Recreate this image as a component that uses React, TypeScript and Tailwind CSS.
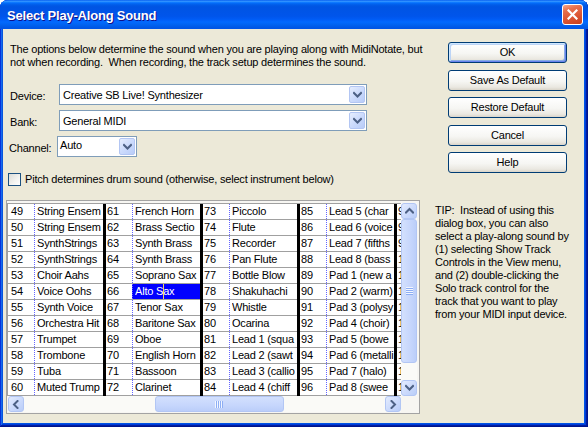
import React from "react";

const groups: { start: number; names: string[] }[] = [
  {
    start: 49,
    names: ["String Ensem", "String Ensem", "SynthStrings", "SynthStrings", "Choir Aahs", "Voice Oohs", "Synth Voice", "Orchestra Hit", "Trumpet", "Trombone", "Tuba", "Muted Trump"],
  },
  {
    start: 61,
    names: ["French Horn", "Brass Sectio", "Synth Brass", "Synth Brass", "Soprano Sax", "Alto Sax", "Tenor Sax", "Baritone Sax", "Oboe", "English Horn", "Bassoon", "Clarinet"],
  },
  {
    start: 73,
    names: ["Piccolo", "Flute", "Recorder", "Pan Flute", "Bottle Blow", "Shakuhachi", "Whistle", "Ocarina", "Lead 1 (squa", "Lead 2 (sawt", "Lead 3 (callio", "Lead 4 (chiff"],
  },
  {
    start: 85,
    names: ["Lead 5 (char", "Lead 6 (voice", "Lead 7 (fifths", "Lead 8 (bass", "Pad 1 (new a", "Pad 2 (warm)", "Pad 3 (polysy", "Pad 4 (choir)", "Pad 5 (bowe", "Pad 6 (metalli", "Pad 7 (halo)", "Pad 8 (swee"],
  },
  {
    start: 97,
    names: ["", "", "", "", "", "", "", "", "", "", "", ""],
  },
];

const groupWidths = ["w-[98px]", "w-[97px]", "w-[97px]", "w-[97px]", "w-[97px]"];

function Chevron({ dir }: { dir: "up" | "down" | "left" | "right" }) {
  const d =
    dir === "up"
      ? "M1 5.5 L4.5 2 L8 5.5"
      : dir === "down"
      ? "M1 2 L4.5 5.5 L8 2"
      : dir === "left"
      ? "M5.5 1 L2 4.5 L5.5 8"
      : "M2.5 1 L6 4.5 L2.5 8";
  const w = dir === "up" || dir === "down" ? 9 : 8;
  const h = dir === "up" || dir === "down" ? 8 : 9;
  return (
    <svg width={w} height={h} viewBox={`0 0 ${w} ${h}`}>
      <path d={d} fill="none" stroke="#4D6185" strokeWidth="2" strokeLinecap="square" />
    </svg>
  );
}

function Combo({ width, text, textClass }: { width: string; text: string; textClass: string }) {
  return (
    <div className={`flex h-[21px] border border-[#7F9DB9] bg-white ${width}`}>
      <div className={`flex-1 overflow-hidden whitespace-nowrap ${textClass}`}>{text}</div>
      <div className="m-[1px] flex w-[16px] items-center justify-center rounded-[2px] border border-[#B3C6F3] bg-[linear-gradient(135deg,#E6EEFE_0%,#CCDBFC_50%,#B8CCF8_100%)]">
        <Chevron dir="down" />
      </div>
    </div>
  );
}

function Button({ label, isDefault }: { label: string; isDefault?: boolean }) {
  return (
    <div
      className={`flex h-[21px] items-center justify-center rounded-[3px] border border-[#003C74] bg-[linear-gradient(180deg,#FFFFFF_0%,#F6F6F3_55%,#EAE8E1_85%,#D9D4C9_100%)] ${
        isDefault
          ? "shadow-[inset_1px_1px_#CEE7FF,inset_-1px_-1px_#6982EE,inset_2px_2px_#BCD4F6,inset_-2px_-2px_#89ADE4]"
          : ""
      }`}
    >
      {label}
    </div>
  );
}

const scrollBtn =
  "flex shrink-0 items-center justify-center rounded-[3px] border border-[#B2C6F4] bg-[linear-gradient(135deg,#E4ECFE_0%,#CBDAFC_55%,#B9CDF8_100%)]";

function VScroll() {
  return (
    <div className="flex h-[193px] w-[16px] flex-col bg-[#FAFAF7]">
      <div className={`${scrollBtn} h-[16px] w-[16px]`}>
        <Chevron dir="up" />
      </div>
      <div className="flex h-[144px] w-[16px] flex-col items-center justify-center gap-[1px] rounded-[3px] border border-[#B2C6F4] bg-[linear-gradient(90deg,#D3E0FD_0%,#C6D6FC_60%,#BBCEF9_100%)]">
        <div className="h-[1px] w-[7px] bg-[#8DAEF4] shadow-[0_-1px_#F2F6FF]" />
        <div className="h-[1px] w-[7px] bg-[#8DAEF4] shadow-[0_-1px_#F2F6FF]" />
        <div className="h-[1px] w-[7px] bg-[#8DAEF4] shadow-[0_-1px_#F2F6FF]" />
        <div className="h-[1px] w-[7px] bg-[#8DAEF4] shadow-[0_-1px_#F2F6FF]" />
      </div>
      <div className="h-[17px]" />
      <div className={`${scrollBtn} h-[16px] w-[16px]`}>
        <Chevron dir="down" />
      </div>
    </div>
  );
}

function HScroll() {
  return (
    <div className="ml-[1px] flex h-[16px] w-[393px] bg-[#FAFAF7]">
      <div className={`${scrollBtn} h-[16px] w-[16px]`}>
        <Chevron dir="left" />
      </div>
      <div className="w-[131px]" />
      <div className="flex h-[16px] w-[129px] items-center justify-center gap-[1px] rounded-[3px] border border-[#B2C6F4] bg-[linear-gradient(180deg,#D3E0FD_0%,#C6D6FC_60%,#BBCEF9_100%)]">
        <div className="h-[7px] w-[1px] bg-[#8DAEF4] shadow-[-1px_0_#F2F6FF]" />
        <div className="h-[7px] w-[1px] bg-[#8DAEF4] shadow-[-1px_0_#F2F6FF]" />
        <div className="h-[7px] w-[1px] bg-[#8DAEF4] shadow-[-1px_0_#F2F6FF]" />
        <div className="h-[7px] w-[1px] bg-[#8DAEF4] shadow-[-1px_0_#F2F6FF]" />
      </div>
      <div className="flex-1" />
      <div className={`${scrollBtn} h-[16px] w-[16px]`}>
        <Chevron dir="right" />
      </div>
    </div>
  );
}

function Grid() {
  return (
    <div className="h-[193px] w-[394px] overflow-hidden border-l border-t border-[#A0A0A0] bg-white">
      <div className="flex w-max">
        {groups.map((g, gi) => (
          <div key={g.start} className={`flex shrink-0 flex-col border-r-[3px] border-black ${groupWidths[gi]}`}>
            {g.names.map((name, ri) => {
              const selected = gi === 1 && ri === 5;
              return (
                <div key={ri} className="flex h-[16px] border-b border-[#A0A0A0] leading-[15px]">
                  <div className={`w-[26px] shrink-0 overflow-hidden whitespace-nowrap ${gi === 0 ? "pl-[3px]" : "pl-[1px]"}`}>
                    {g.start + ri}
                  </div>
                  <div
                    className={`min-w-0 flex-1 border-l border-dotted border-[#6464FF] pl-[2px] ${
                      selected ? "bg-[#0000FF] text-white" : ""
                    }`}
                  >
                    <div className="overflow-hidden whitespace-nowrap">
                      {selected ? (
                        <>
                          Alto S
                          <span className="relative">
                            <span className="absolute left-[-0.5px] top-[-1px] h-[15px] w-[1px] bg-[#F2D860]" />
                          </span>
                          ax
                        </>
                      ) : (
                        name
                      )}
                    </div>
                  </div>
                </div>
              );
            })}
          </div>
        ))}
      </div>
    </div>
  );
}

export default function App() {
  return (
    <div className="h-[427px] w-[588px] font-['Liberation_Sans',Arial,sans-serif] text-[11px] tracking-[-0.2px] text-black">
      <div className="flex h-full w-full flex-col rounded-t-[8px] bg-[#0054E3] shadow-[inset_-1px_-1px_#00138C,inset_1px_1px_#0831D9,inset_-2px_-2px_#001EA0,inset_2px_2px_#166AEE,inset_-3px_-3px_#003BDA,inset_3px_3px_#0855DD]">
        <div className="flex h-[29px] shrink-0 items-center justify-between rounded-t-[8px] bg-[linear-gradient(180deg,#0058EE_0%,#3593FF_4%,#288EFF_6%,#127DFF_8%,#036FFC_10%,#0262EE_14%,#0057E5_20%,#0054E3_24%,#0055EB_56%,#005BF5_66%,#026AFE_76%,#0062EF_86%,#0058E6_94%,#0055E5_100%)] pl-[7px] pr-[5px]">
          <span className="pt-[2px] text-[13px] font-bold leading-[16px] text-white [text-shadow:1px_1px_#0F1089]">
            Select Play-Along Sound
          </span>
          <div className="flex h-[21px] w-[21px] items-center justify-center rounded-[3px] border border-white bg-[linear-gradient(160deg,#F4A78C_0%,#E8714E_25%,#DC5634_60%,#C63F1D_100%)]">
            <svg width="11" height="11" viewBox="0 0 11 11">
              <path d="M1.5 1.5 L9.5 9.5 M9.5 1.5 L1.5 9.5" stroke="#FFFFFF" strokeWidth="2.2" strokeLinecap="square" />
            </svg>
          </div>
        </div>

        <div className="mb-[4px] ml-[3px] mr-[4px] flex flex-1 flex-col bg-[#ECE9D8]">
          <div className="flex">
            <div className="w-[445px] pl-[7px] pt-[14px]">
              <p className="leading-[13px]">
                The options below determine the sound when you are playing along with MidiNotate, but
                <br />
                {"not when recording.\u00A0 When recording, the track setup determines the sound."}
              </p>
              <div className="mt-[15px] flex items-center">
                <span className="mt-[3px] w-[49px] leading-[13px]">Device:</span>
                <Combo width="w-[308px]" text="Creative SB Live! Synthesizer" textClass="pl-[3px] pt-[1px] leading-[19px]" />
              </div>
              <div className="mt-[5px] flex items-center">
                <span className="mt-[3px] w-[49px] leading-[13px]">Bank:</span>
                <Combo width="w-[308px]" text="General MIDI" textClass="pl-[3px] pt-[1px] leading-[19px]" />
              </div>
              <div className="ml-[-1px] mt-[5px] flex items-center">
                <span className="mt-[3px] w-[48px] leading-[13px]">Channel:</span>
                <Combo width="w-[80px]" text="Auto" textClass="pl-[2px] leading-[17px]" />
              </div>
              <div className="ml-[-2px] mt-[16px] flex h-[13px] items-center">
                <div className="h-[13px] w-[13px] shrink-0 border border-[#1C5180] bg-[linear-gradient(135deg,#DCDCD7_0%,#F4F4F1_60%,#FFFFFF_100%)]" />
                <span className="ml-[4px] leading-[13px]">Pitch determines drum sound (otherwise, select instrument below)</span>
              </div>
            </div>
            <div className="flex w-[119px] flex-col gap-[6.5px] pt-[13px]">
              <Button label="OK" isDefault />
              <Button label="Save As Default" />
              <Button label="Restore Default" />
              <Button label="Cancel" />
              <Button label="Help" />
            </div>
          </div>

          <div className="mt-[14px] flex items-start">
            <div className="ml-[3px] flex flex-col border border-[#A3A3A3] bg-[#F7F6F2] pb-[1px] pr-[2px] pt-[2px]">
              <div className="flex">
                <Grid />
                <VScroll />
              </div>
              <div className="flex">
                <HScroll />
                <div className="h-[16px] w-[16px]" />
              </div>
            </div>
            <p className="ml-[15px] mt-[3.5px] leading-[13px]">
              {"TIP:\u00A0 Instead of using this"}
              <br />
              dialog box, you can also
              <br />
              select a play-along sound by
              <br />
              (1) selecting Show Track
              <br />
              Controls in the View menu,
              <br />
              and (2) double-clicking the
              <br />
              Solo track control for the
              <br />
              track that you want to play
              <br />
              from your MIDI input device.
            </p>
          </div>
        </div>
      </div>
    </div>
  );
}
